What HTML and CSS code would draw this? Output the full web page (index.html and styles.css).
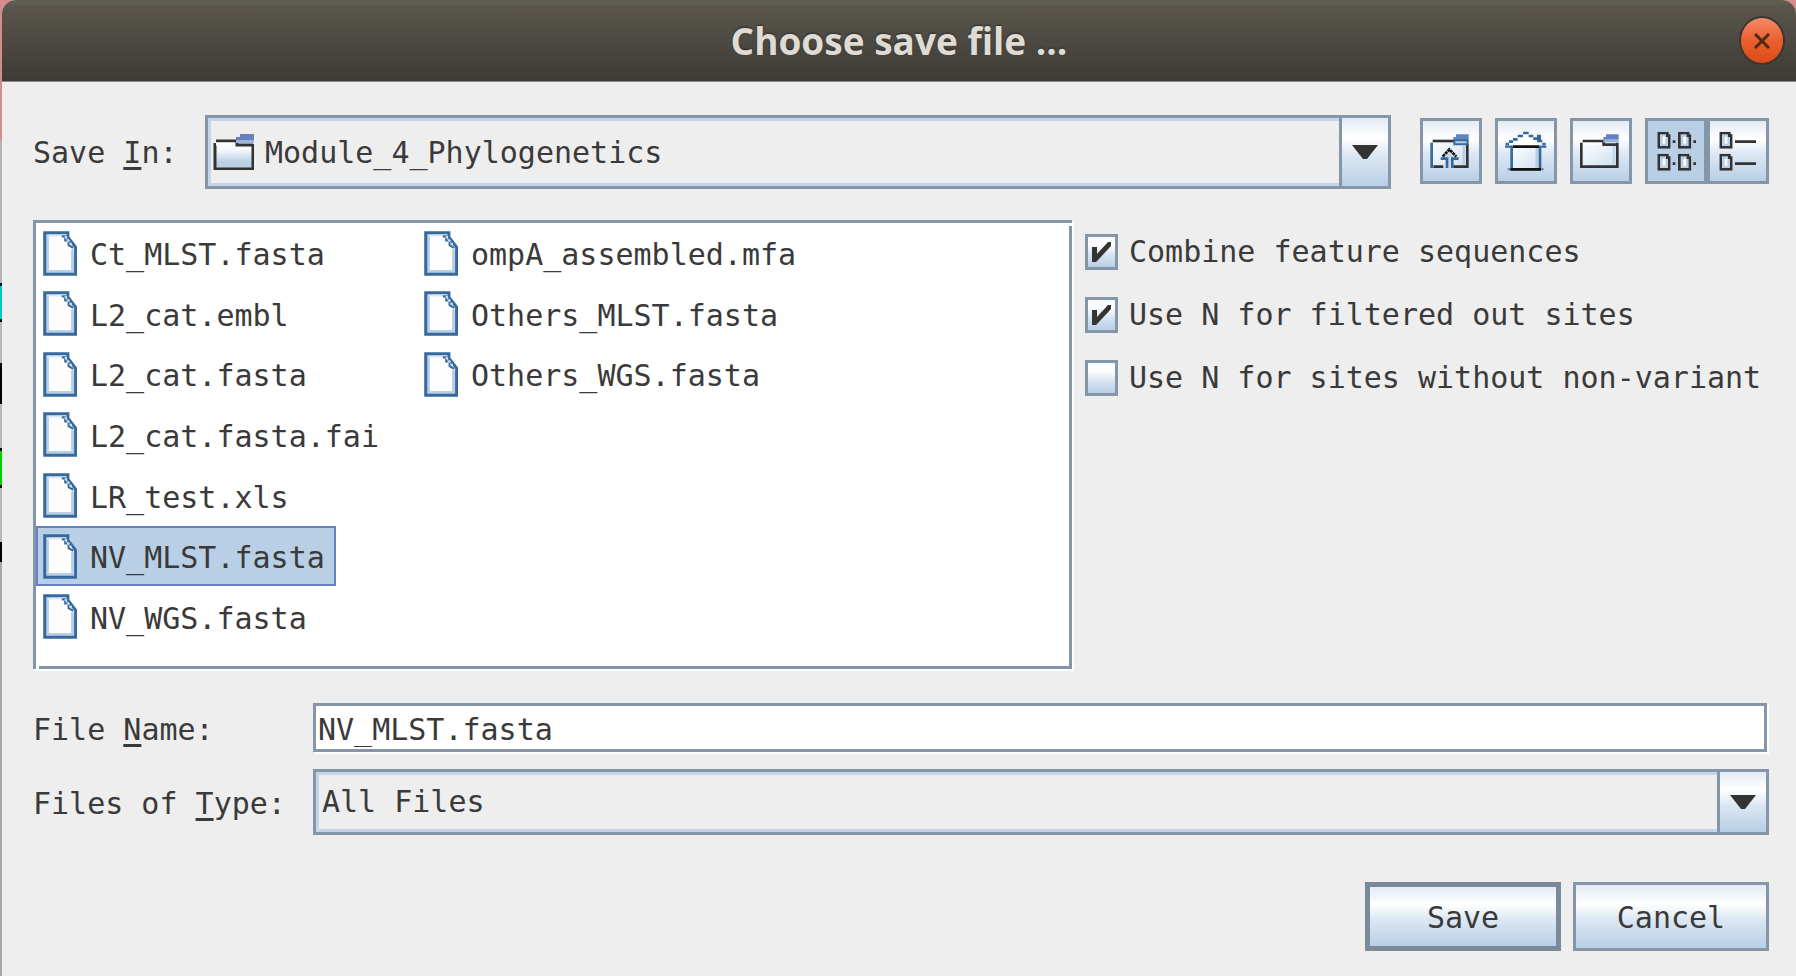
FILE: index.html
```html
<!DOCTYPE html>
<html lang="en">
<head>
<meta charset="utf-8">
<title>Choose save file ...</title>
<link rel="stylesheet" href="styles.css">
</head>
<body>
<svg class="defs" width="0" height="0" aria-hidden="true">
  <defs>
    <linearGradient id="face" x1="0" y1="0" x2="0" y2="1">
      <stop offset="0" stop-color="#ffffff"/><stop offset="0.3" stop-color="#f4f8fc"/><stop offset="0.75" stop-color="#b8cfe5"/><stop offset="1" stop-color="#b8cfe5"/>
    </linearGradient>
    <linearGradient id="pale" x1="0" y1="0" x2="1" y2="1">
      <stop offset="0" stop-color="#ffffff"/><stop offset="1" stop-color="#cfdff0"/>
    </linearGradient>
    <symbol id="file" viewBox="0 0 101 134">
      <path d="M4 4H74L97 50V130H4Z" fill="#fdfdfe"/>
      <path d="M13 9V121H88V54" fill="none" stroke="#b8cfe5" stroke-width="9"/>
      <path d="M13 13H58" stroke="#dce8f4" stroke-width="7"/>
      <path d="M5 5H74V18L97 48V129H5Z" fill="none" stroke="#366a9f" stroke-width="9"/>
      <path d="M56 16L66 16L66 28L76 28L76 42L90 50" fill="none" stroke="#366a9f" stroke-width="6"/>
      <path d="M66 15L74 27L84 40" fill="none" stroke="#c8daec" stroke-width="7" stroke-dasharray="7 6"/>
    </symbol>
    <symbol id="mini" viewBox="0 0 40 51">
      <path d="M4 4H30V12H36V47H4Z" fill="#b8cfe5" stroke="#333" stroke-width="8"/>
      <path d="M16 15H24V36H16Z" fill="#fff"/>
    </symbol>
  </defs>
</svg>

<main class="dialog">
  <header class="titlebar">
    <h1 class="title">Choose save file ...</h1>
    <button class="close" type="button" aria-label="Close">
      <svg viewBox="0 0 16 16" width="16" height="16"><path d="M1 1L15 15M15 1L1 15" stroke="#4a2c12" stroke-width="3"/></svg>
    </button>
  </header>

  <form class="content">
    <div class="top">
      <label class="label" for="folder">Save <u>I</u>n:</label>
      <div class="combo combo-folder">
        <svg class="combo-icon" viewBox="0 0 41 36" width="41" height="36">
          <path d="M2 8H40V35H2Z" fill="url(#face)"/>
          <path d="M2 9V35H40V10" fill="none" stroke="#333" stroke-width="3"/>
          <path d="M3 7H24V11H40" fill="none" stroke="#333" stroke-width="3"/>
          <path d="M3 10H22" stroke="#fff" stroke-width="3"/>
          <path d="M27 0H41V6H23V3H27Z" fill="#6382bf"/><path d="M23 6H41V9H23Z" fill="#9db4da"/>
        </svg>
        <select id="folder"><option>Module_4_Phylogenetics</option></select>
        <span class="arrow"><svg viewBox="0 0 26 14" width="26" height="14"><path d="M0 0H26L15 14H11Z" fill="#333"/></svg></span>
      </div>
      <div class="tools">
        <button class="tool" type="button" aria-label="Up one level">
          <svg viewBox="9 9 168 180">
            <path d="M35 69H142V146H35Z" fill="url(#pale)"/>
            <path d="M38 69H102" stroke="#333" stroke-width="8"/>
            <path d="M142 78V146H100M40 146H70" fill="none" stroke="#333" stroke-width="8"/>
            <path d="M35 74V150" stroke="#366a9f" stroke-width="8"/>
            <path d="M132 84V140" stroke="#b8cfe5" stroke-width="9"/>
            <path d="M108 49H146V65H100V57H108Z" fill="#6382bf"/>
            <path d="M103 67H143V79H103Z" fill="#b8cfe5" stroke="#366a9f" stroke-width="6"/>
            <path d="M82 150V122H66L88 98L110 122H96V150Z" fill="#c4d7ea"/>
            <path d="M62 122H81V150M116 122H97V150" fill="none" stroke="#366a9f" stroke-width="8"/>
            <path d="M68 116L88 94L109 116" fill="none" stroke="#111" stroke-width="8" stroke-dasharray="9 2"/>
          </svg>
        </button>
        <button class="tool" type="button" aria-label="Home">
          <svg viewBox="9 9 168 180">
            <path d="M34 80L92 46L150 80Z" fill="#fff"/>
            <path d="M50 86H135V154H50Z" fill="url(#pale)"/>
            <path d="M126 90V150" stroke="#b8cfe5" stroke-width="9"/>
            <path d="M32 78H42M42 71H54M54 64H68M68 54H84M84 45H101M101 54H115M115 62H128M128 69H142M142 78H152" fill="none" stroke="#366a9f" stroke-width="8"/>
            <path d="M120 60H126V50H138V72H126V66H120Z" fill="#366a9f"/>
            <path d="M30 86H52M134 86H154" stroke="#366a9f" stroke-width="7"/>
            <path d="M50 84V154M135 84V154" stroke="#366a9f" stroke-width="8"/>
            <path d="M38 154H146" stroke="#5c83ab" stroke-width="6"/>
            <path d="M54 86H132M46 154H138" stroke="#111" stroke-width="8"/>
          </svg>
        </button>
        <button class="tool" type="button" aria-label="New folder">
          <svg viewBox="9 9 168 180">
            <path d="M34 69H142V146H34Z" fill="url(#pale)"/>
            <path d="M42 77H100" stroke="#fff" stroke-width="8"/>
            <path d="M132 84V140" stroke="#c4d7ea" stroke-width="8"/>
            <path d="M34 74V146H142V74" fill="none" stroke="#333" stroke-width="8"/>
            <path d="M38 69H101V80H142" fill="none" stroke="#333" stroke-width="8"/>
            <path d="M108 49H146V65H100V57H108Z" fill="#6382bf"/>
            <path d="M100 65H146V73H100Z" fill="#9db4da"/>
          </svg>
        </button>
        <div class="toggles">
          <button class="tool tool-on" type="button" aria-label="List" aria-pressed="true">
            <svg viewBox="9 9 168 180">
              <use href="#mini" x="37" y="41" width="40" height="51"/><use href="#mini" x="99" y="41" width="40" height="51"/>
              <use href="#mini" x="37" y="107" width="40" height="51"/><use href="#mini" x="99" y="107" width="40" height="51"/>
              <path d="M83 67H91V75H83ZM145 67H153V75H145ZM83 133H91V141H83ZM145 133H153V141H145Z" fill="#333"/>
            </svg>
          </button>
          <button class="tool" type="button" aria-label="Details" aria-pressed="false">
            <svg viewBox="9 9 168 180">
              <use href="#mini" x="37" y="41" width="40" height="51"/><use href="#mini" x="37" y="107" width="40" height="51"/>
              <path d="M84 71H147M84 137H147" stroke="#333" stroke-width="8"/>
            </svg>
          </button>
        </div>
      </div>
    </div>

    <div class="middle">
      <ul class="files" role="listbox" aria-label="Files">
        <li class="file" role="option"><svg class="file-icon"><use href="#file"/></svg><span class="file-name">Ct_MLST.fasta</span></li>
        <li class="file" role="option"><svg class="file-icon"><use href="#file"/></svg><span class="file-name">L2_cat.embl</span></li>
        <li class="file" role="option"><svg class="file-icon"><use href="#file"/></svg><span class="file-name">L2_cat.fasta</span></li>
        <li class="file" role="option"><svg class="file-icon"><use href="#file"/></svg><span class="file-name">L2_cat.fasta.fai</span></li>
        <li class="file" role="option"><svg class="file-icon"><use href="#file"/></svg><span class="file-name">LR_test.xls</span></li>
        <li class="file file-selected" role="option" aria-selected="true"><svg class="file-icon"><use href="#file"/></svg><span class="file-name">NV_MLST.fasta</span></li>
        <li class="file" role="option"><svg class="file-icon"><use href="#file"/></svg><span class="file-name">NV_WGS.fasta</span></li>
        <li class="file" role="option"><svg class="file-icon"><use href="#file"/></svg><span class="file-name">ompA_assembled.mfa</span></li>
        <li class="file" role="option"><svg class="file-icon"><use href="#file"/></svg><span class="file-name">Others_MLST.fasta</span></li>
        <li class="file" role="option"><svg class="file-icon"><use href="#file"/></svg><span class="file-name">Others_WGS.fasta</span></li>
      </ul>
      <div class="options">
        <label class="option"><span class="check"><input type="checkbox" checked><svg viewBox="0 0 19 20" width="19" height="20"><path d="M0 5H5V12L16 0H19V4L6 18L4 20H0Z" fill="#333"/></svg></span>Combine feature sequences</label>
        <label class="option"><span class="check"><input type="checkbox" checked><svg viewBox="0 0 19 20" width="19" height="20"><path d="M0 5H5V12L16 0H19V4L6 18L4 20H0Z" fill="#333"/></svg></span>Use N for filtered out sites</label>
        <label class="option"><span class="check"><input type="checkbox"></span>Use N for sites without non-variant</label>
      </div>
    </div>

    <div class="fields">
      <label class="label" for="name">File <u>N</u>ame:</label>
      <input class="name" id="name" type="text" value="NV_MLST.fasta">
      <label class="label" for="type">Files of <u>T</u>ype:</label>
      <div class="combo combo-type">
        <select id="type"><option>All Files</option></select>
        <span class="arrow"><svg viewBox="0 0 26 14" width="26" height="14"><path d="M0 0H26L15 14H11Z" fill="#333"/></svg></span>
      </div>
    </div>

    <div class="actions">
      <button class="action action-default" type="button">Save</button>
      <button class="action" type="button">Cancel</button>
    </div>
  </form>
</main>
</body>
</html>
```

FILE: styles.css
```css
:root {
  --edge: #8496a8;
  --tint: #b8cfe5;
  --metal: linear-gradient(#e3ebf6, #ffffff 30%, #dce7f3 55%, #b8cfe5);
}

* { box-sizing: border-box; }

body {
  margin: 0;
  min-height: 100vh;
  padding-left: 2px;
  display: flex;
  font: 30px/36px "DejaVu Sans Mono", monospace;
  color: #3a3a3a;
  background: linear-gradient(#d88a8c 0 140px, #b4b4b4 140px 283px, #000 283px 286px,
    #00c8d0 286px 319px, #000 319px 322px, #b8b8b8 322px 363px, #000 363px 404px,
    #b8b8b8 404px 448px, #000 448px 451px, #00d000 451px 485px, #000 485px 488px,
    #b8b8b8 488px 542px, #000 542px 562px, #a8a8a8 562px);
}

.defs { position: absolute; }

.dialog {
  flex: 1;
  min-width: 0;
  background: #eee;
  border-radius: 14px 14px 0 0;
}

.titlebar {
  height: 82px;
  display: grid;
  grid-template-columns: 1fr auto 1fr;
  align-items: center;
  padding: 0 13px;
  background: linear-gradient(#5f5d50 0 4px, #5a564d 6px, #3d3b36);
  border-bottom: 1px solid #8a8984;
  border-radius: 14px 14px 0 0;
}

.title {
  grid-column: 2;
  margin: 0;
  font: bold 37px/48px "Open Sans", sans-serif;
  color: #dfdbd2;
  text-shadow: 0 -1px 2px #2c2b28;
}

.close {
  justify-self: end;
  width: 42px;
  height: 45px;
  padding: 0;
  display: grid;
  place-items: center;
  border: 0;
  border-radius: 50%;
  background: linear-gradient(#f58a68, #ea5f30 50%, #dd4a18);
  box-shadow: 0 0 0 2px #3a3631;
}

.content { padding: 33px 27px 24px 31px; }

.top {
  display: flex;
  align-items: center;
}

.label {
  padding-top: 4px;
  white-space: nowrap;
}

.top .label {
  width: 172px;
  padding-top: 2px;
}

u {
  text-decoration-thickness: 3px;
  text-underline-offset: 4px;
}

.combo {
  position: relative;
  flex: 1;
  min-width: 0;
}

.combo select {
  appearance: none;
  display: block;
  width: 100%;
  margin: 0;
  border: 3px solid var(--edge);
  border-radius: 0;
  outline: 0;
  background: #eee;
  box-shadow: inset 0 0 0 3px #c3d6e9;
  font: inherit;
  color: inherit;
}

.combo-folder select {
  height: 74px;
  padding: 2px 60px 0 57px;
}

.combo-type select {
  height: 66px;
  padding: 0 60px 0 6px;
}

.combo-icon {
  position: absolute;
  left: 8px;
  top: 19px;
}

.arrow {
  position: absolute;
  top: 3px;
  right: 3px;
  bottom: 3px;
  width: 49px;
  display: grid;
  place-items: center;
  border-left: 3px solid var(--edge);
  background: var(--metal);
  pointer-events: none;
}

.tools {
  display: flex;
  gap: 13px;
  margin-left: 29px;
  padding-bottom: 3px;
}

.tool {
  width: 62px;
  height: 66px;
  padding: 0;
  border: 3px solid var(--edge);
  background: var(--metal);
}

.tool svg {
  display: block;
  width: 56px;
  height: 60px;
}

.tool-on { background: var(--tint); }

.toggles { display: flex; }

.middle {
  display: flex;
  gap: 13px;
  margin-top: 31px;
}

.files {
  position: relative;
  flex: 1;
  min-width: 0;
  height: 449px;
  margin: 0;
  padding: 0 0 19px;
  display: grid;
  grid-template-rows: repeat(7, 1fr);
  grid-auto-flow: column;
  grid-auto-columns: 381px;
  list-style: none;
  background: #fff;
  border: 3px solid var(--edge);
  box-shadow: 2px 2px 0 #fff;
}

/* white notches of the etched border, top right and bottom left */
.files::before,
.files::after {
  content: "";
  position: absolute;
  width: 3px;
  height: 3px;
  background: #fff;
}

.files::before { top: 0; right: -3px; }

.files::after { bottom: -3px; left: 0; }

.file {
  justify-self: start;
  display: flex;
  align-items: center;
  gap: 13px;
  padding: 0 9px 0 5px;
  border: 2px solid transparent;
  white-space: nowrap;
}

.file-name { padding-top: 4px; }

.file-selected {
  background: var(--tint);
  border-color: #6382bf;
}

.file-icon {
  flex: none;
  width: 34px;
  height: 45px;
}

.options {
  display: flex;
  flex-direction: column;
  gap: 27px;
  padding-top: 14px;
  width: 684px;
}

.option {
  display: flex;
  align-items: center;
  gap: 11px;
  white-space: nowrap;
}

.check {
  display: grid;
  place-items: center;
}

.check > * { grid-area: 1 / 1; }

.check svg { pointer-events: none; }

.check input {
  appearance: none;
  width: 33px;
  height: 36px;
  margin: 0;
  border: 3px solid var(--edge);
  background: linear-gradient(#f4f8fc, #fff 25%, #dce7f3 55%, #b8cfe5);
}

.fields {
  display: grid;
  grid-template-columns: 280px 1fr;
  row-gap: 17px;
  align-items: center;
  margin-top: 34px;
}

.name {
  height: 49px;
  min-width: 0;
  margin-right: 2px;
  padding: 3px 2px 0;
  border: 3px solid var(--edge);
  border-radius: 0;
  outline: 0;
  background: #fff;
  box-shadow: 2px 2px 0 #fff;
  font: inherit;
  color: inherit;
}

.actions {
  display: flex;
  justify-content: flex-end;
  gap: 12px;
  margin-top: 47px;
}

.action {
  width: 196px;
  height: 69px;
  padding: 2px 0 0;
  border: 3px solid var(--edge);
  background: var(--metal);
  font: inherit;
  color: inherit;
}

.action-default { border: 5px solid #7a8a99; }
```
